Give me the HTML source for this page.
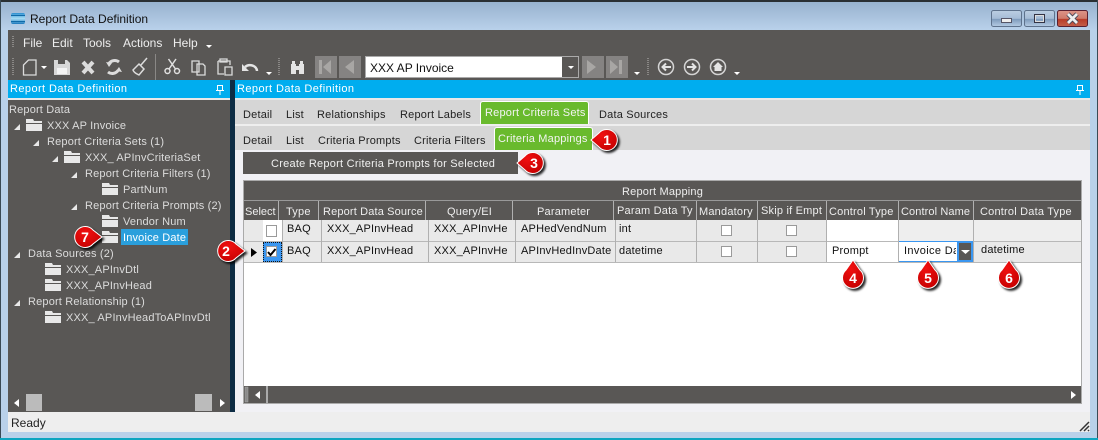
<!DOCTYPE html>
<html><head><meta charset="utf-8"><style>
html,body{margin:0;padding:0;width:1098px;height:440px;overflow:hidden;background:#b9d1ea}
body{position:relative;font-family:"Liberation Sans",sans-serif;font-size:11px;color:#111}
.b{position:absolute}
.t{position:absolute;white-space:nowrap;line-height:14px;height:14px}
.m{color:#eee;font-size:12px}
.n{color:#fff;font-size:11px;letter-spacing:.42px}
.tr{color:#dcdcdc;font-size:11px;letter-spacing:.17px}
.tb{color:#222;font-size:11px;letter-spacing:.2px}
.h{color:#eee;font-size:11px;letter-spacing:.2px}
.c{color:#111;font-size:11px;letter-spacing:.2px}
</style></head><body>
<div class="b" style="left:0;top:0;width:1098px;height:440px;background:#b9d1ea"></div>
<div class="b" style="left:0;top:2px;width:1098px;height:28px;background:linear-gradient(#98b2ce,#b9d1ea)"></div>
<div class="b" style="left:0;top:0;width:1098px;height:2px;background:#2a2f33"></div>
<div class="b" style="left:0;top:0;width:1px;height:440px;background:#3a4a55"></div>
<div class="b" style="left:1097px;top:0;width:1px;height:440px;background:#3a4a55"></div>
<div class="b" style="left:0;top:438px;width:1098px;height:2px;background:#0ea5c0"></div>
<div class="t" style="left:30px;top:12px;font-size:12px;color:#111">Report Data Definition</div>

<div class="b" style="left:8px;top:30px;width:1082px;height:50px;background:#595755"></div>
<div class="b" style="left:8px;top:80px;width:1082px;height:18px;background:#00adef"></div>
<div class="b" style="left:8px;top:98px;width:222px;height:2px;background:#e8e8e8"></div>
<div class="b" style="left:8px;top:100px;width:222px;height:312px;background:#595755"></div>
<div class="b" style="left:230px;top:80px;width:5px;height:332px;background:#0d2c44"></div>
<div class="b" style="left:235px;top:98px;width:855px;height:2px;background:#e8e8e8"></div>
<div class="b" style="left:235px;top:100px;width:855px;height:24px;background:#d6d6d6"></div>
<div class="b" style="left:235px;top:124px;width:855px;height:2px;background:#eee"></div>
<div class="b" style="left:235px;top:126px;width:855px;height:24px;background:#d6d6d6"></div>
<div class="b" style="left:235px;top:150px;width:855px;height:262px;background:#f1f1f5"></div>
<div class="b" style="left:8px;top:412px;width:1082px;height:20px;background:#eeeeee"></div>

<div class="t m" style="left:23px;top:36px">File</div>
<div class="t m" style="left:52px;top:36px">Edit</div>
<div class="t m" style="left:83px;top:36px">Tools</div>
<div class="t m" style="left:123px;top:36px">Actions</div>
<div class="t m" style="left:173px;top:36px">Help</div>
<div class="t n" style="left:10px;top:82px">Report Data Definition</div>
<div class="t n" style="left:237px;top:82px">Report Data Definition</div>

<div class="b" style="left:315px;top:56px;width:22px;height:22px;background:#858382"></div>
<div class="b" style="left:339px;top:56px;width:22px;height:22px;background:#858382"></div>
<div class="b" style="left:365px;top:56px;width:214px;height:22px;background:#fff;box-sizing:border-box;border:1px solid #aaa"></div>
<div class="b" style="left:562px;top:57px;width:16px;height:20px;background:#595755"></div>
<div class="t" style="left:370px;top:61px;font-size:12px;color:#111">XXX AP Invoice</div>
<div class="b" style="left:582px;top:56px;width:22px;height:22px;background:#858382"></div>
<div class="b" style="left:606px;top:56px;width:22px;height:22px;background:#858382"></div>

<div class="t tr" style="left:9px;top:103px">Report Data</div>
<div class="t tr" style="left:47px;top:119px">XXX AP Invoice</div>
<div class="t tr" style="left:47px;top:135px">Report Criteria Sets (1)</div>
<div class="t tr" style="left:85px;top:151px">XXX_ APInvCriteriaSet</div>
<div class="t tr" style="left:85px;top:167px">Report Criteria Filters (1)</div>
<div class="t tr" style="left:123px;top:183px">PartNum</div>
<div class="t tr" style="left:85px;top:199px">Report Criteria Prompts (2)</div>
<div class="t tr" style="left:123px;top:215px">Vendor Num</div>
<div class="b" style="left:121px;top:229px;width:67px;height:16px;background:#2a9fdc"></div>
<div class="t tr" style="left:123px;top:231px;color:#fff">Invoice Date</div>
<div class="t tr" style="left:28px;top:247px">Data Sources (2)</div>
<div class="t tr" style="left:66px;top:263px">XXX_APInvDtl</div>
<div class="t tr" style="left:66px;top:279px">XXX_APInvHead</div>
<div class="t tr" style="left:28px;top:295px">Report Relationship (1)</div>
<div class="t tr" style="left:66px;top:311px">XXX_ APInvHeadToAPInvDtl</div>

<div class="b" style="left:26px;top:394px;width:16px;height:17px;background:#bbb"></div>
<div class="b" style="left:195px;top:394px;width:17px;height:17px;background:#bbb"></div>

<div class="b" style="left:480px;top:101px;width:109px;height:23px;box-sizing:border-box;background:#69ba2d;border:1px solid #fff;border-bottom:0;border-radius:3px 3px 0 0"></div>
<div class="b" style="left:494px;top:127px;width:99px;height:23px;box-sizing:border-box;background:#69ba2d;border:1px solid #fff;border-bottom:0;border-radius:3px 3px 0 0"></div>
<div class="t tb" style="left:243px;top:108px">Detail</div>
<div class="t tb" style="left:286px;top:108px">List</div>
<div class="t tb" style="left:317px;top:108px">Relationships</div>
<div class="t tb" style="left:400px;top:108px">Report Labels</div>
<div class="t tb" style="left:485px;top:106px;color:#f4f4f4">Report Criteria Sets</div>
<div class="t tb" style="left:599px;top:108px">Data Sources</div>
<div class="t tb" style="left:243px;top:134px">Detail</div>
<div class="t tb" style="left:286px;top:134px">List</div>
<div class="t tb" style="left:318px;top:134px">Criteria Prompts</div>
<div class="t tb" style="left:414px;top:134px">Criteria Filters</div>
<div class="t tb" style="left:498px;top:132px;color:#f4f4f4">Criteria Mappings</div>
<div class="b" style="left:243px;top:152px;width:275px;height:22px;background:#595755"></div>
<div class="t" style="left:271px;top:157px;color:#f0f0f0;letter-spacing:.25px">Create Report Criteria Prompts for Selected</div>

<div class="b" style="left:243px;top:180px;width:839px;height:224px;background:#fff;box-sizing:border-box;border:1px solid #aaa"></div>
<div class="b" style="left:244px;top:181px;width:837px;height:39px;background:#595755"></div>
<div class="b" style="left:244px;top:200px;width:837px;height:1px;background:#999"></div>
<div class="t h" style="left:622px;top:185px">Report Mapping</div>
<div class="b" style="left:244px;top:220px;width:837px;height:42px;background:#e9e9e9"></div>
<div class="b" style="left:244px;top:241px;width:837px;height:1px;background:#b8b8b8"></div>
<div class="b" style="left:244px;top:262px;width:837px;height:1px;background:#b8b8b8"></div>
<div class="b" style="left:263px;top:220px;width:19px;height:21px;background:#fff"></div>
<div class="b" style="left:827px;top:220px;width:71px;height:21px;background:#fff"></div>
<div class="b" style="left:827px;top:242px;width:71px;height:20px;background:#fff"></div>
<div class="b" style="left:898px;top:220px;width:75px;height:21px;background:#eeeeee"></div>
<div class="b" style="left:973px;top:220px;width:108px;height:21px;background:#eeeeee"></div>
<div class="b" style="left:263px;top:242px;width:19px;height:20px;background:#3a96f0;box-sizing:border-box;border:1px dotted #111"></div>
<div class="b" style="left:898px;top:241px;width:75px;height:21px;background:#fff;box-sizing:border-box;border:1px solid #3a96f0"></div>
<div class="b" style="left:957px;top:241px;width:16px;height:21px;background:#595755;box-sizing:border-box;border:2px solid #3a96f0"></div>

<svg class="b" style="left:0;top:0" width="1098" height="440" viewBox="0 0 1098 440" fill="none">
<defs>
<linearGradient id="wb" x1="0" y1="0" x2="0" y2="1"><stop offset="0" stop-color="#bccee2"/><stop offset=".5" stop-color="#a5bcd6"/><stop offset=".55" stop-color="#7f9cbc"/><stop offset="1" stop-color="#b6cce4"/></linearGradient>
<linearGradient id="wc" x1="0" y1="0" x2="0" y2="1"><stop offset="0" stop-color="#dd9488"/><stop offset=".5" stop-color="#cf7a6a"/><stop offset=".55" stop-color="#b83c28"/><stop offset="1" stop-color="#c4604a"/></linearGradient>
<linearGradient id="ic" x1="0" y1="0" x2="0" y2="1"><stop offset="0" stop-color="#2b8fd0"/><stop offset=".5" stop-color="#a8dcf4"/><stop offset="1" stop-color="#1a78bc"/></linearGradient>
</defs>
<g stroke="#b0b0b0" stroke-width="1">
<path d="M278.500 201V220M318.500 201V220M425.500 201V220M512.500 201V220M613.500 201V220"/>
<path d="M282.500 220V262M321.500 220V262M428.500 220V262M515.500 220V262M615.500 220V262"/>
<path d="M696.500 201V262M757.500 201V262M826.500 201V262M898.500 201V262M973.500 201V262"/>
</g>
<g fill="#fff" stroke="#9a9a9a"><rect x="266.500" y="225.500" width="10" height="11"/><rect x="721.500" y="225.500" width="10" height="10"/><rect x="786.500" y="225.500" width="10" height="10"/><rect x="721.500" y="246.500" width="10" height="10"/><rect x="786.500" y="246.500" width="10" height="10"/><rect x="266.500" y="246.500" width="10" height="10"/></g>
<path d="M268 252l2.500 3 5-6" stroke="#000" stroke-width="2"/>
<path d="M251 248l6 4.500-6 4.500z" fill="#000"/>
<path d="M961 250h9l-4.500 4z" fill="#fff"/>

<rect x="11" y="13" width="14" height="11" rx="2" fill="url(#ic)"/><rect x="11" y="15" width="14" height="1" fill="#0f6aa8"/><rect x="11" y="21" width="14" height="1" fill="#0f6aa8"/>
<rect x="991.500" y="10.500" width="30" height="16" rx="2" fill="url(#wb)" stroke="#5e728c"/>
<rect x="1024.500" y="10.500" width="30" height="16" rx="2" fill="url(#wb)" stroke="#5e728c"/>
<rect x="1057.500" y="10.500" width="30" height="16" rx="2" fill="url(#wc)" stroke="#5a2030"/>
<rect x="1001.500" y="18.500" width="10" height="4" fill="#eee" stroke="#556"/>
<rect x="1034.500" y="14.500" width="10" height="8" fill="none" stroke="#334" stroke-width="1"/>
<rect x="1035.500" y="15.500" width="8" height="6" fill="none" stroke="#ddd" stroke-width="1"/>
<path d="M1068 14l9 9M1077 14l-9 9" stroke="#445" stroke-width="4.500"/>
<path d="M1068 14l9 9M1077 14l-9 9" stroke="#eee" stroke-width="2.800"/>

<g fill="#8a8886"><rect x="12" y="36" width="2" height="1"/><rect x="12" y="38" width="2" height="1"/><rect x="12" y="40" width="2" height="1"/><rect x="12" y="42" width="2" height="1"/><rect x="12" y="44" width="2" height="1"/><rect x="12" y="46" width="2" height="1"/>
<rect x="12" y="58" width="2" height="1"/><rect x="12" y="60" width="2" height="1"/><rect x="12" y="62" width="2" height="1"/><rect x="12" y="64" width="2" height="1"/><rect x="12" y="66" width="2" height="1"/><rect x="12" y="68" width="2" height="1"/><rect x="12" y="70" width="2" height="1"/><rect x="12" y="72" width="2" height="1"/><rect x="12" y="74" width="2" height="1"/>
<rect x="278" y="58" width="2" height="1"/><rect x="278" y="60" width="2" height="1"/><rect x="278" y="62" width="2" height="1"/><rect x="278" y="64" width="2" height="1"/><rect x="278" y="66" width="2" height="1"/><rect x="278" y="68" width="2" height="1"/><rect x="278" y="70" width="2" height="1"/><rect x="278" y="72" width="2" height="1"/><rect x="278" y="74" width="2" height="1"/>
<rect x="647" y="58" width="2" height="1"/><rect x="647" y="60" width="2" height="1"/><rect x="647" y="62" width="2" height="1"/><rect x="647" y="64" width="2" height="1"/><rect x="647" y="66" width="2" height="1"/><rect x="647" y="68" width="2" height="1"/><rect x="647" y="70" width="2" height="1"/><rect x="647" y="72" width="2" height="1"/><rect x="647" y="74" width="2" height="1"/>
<rect x="155" y="54" width="1" height="26"/></g>

<g fill="#fff">
<path d="M206 45h6l-3 3zM41 66h6l-3 3zM266 72h6l-3 3zM634 72h6l-3 3zM734 72h6l-3 3zM568 66h6l-3 3z"/>
</g>
<path d="M23.500 65l5-5h7.500v15h-12.500z" stroke="#dcdcdc" stroke-width="1.300"/>
<path d="M54 60h13l3 3v12h-16z" fill="#d8d8d8"/><rect x="58" y="60" width="7" height="4" fill="#595755"/><rect x="57" y="68" width="10" height="6" fill="#f4f4f4"/>
<path d="M83 62l10 11M93 62l-10 11" stroke="#dcdcdc" stroke-width="4"/>
<path d="M119 62a7 7 0 0 0-10 1.500M108 72a7 7 0 0 0 10-1.500" stroke="#dcdcdc" stroke-width="3"/>
<path d="M106 62l6 1-3 4zM122 72l-6-1 3-4z" fill="#dcdcdc"/>
<path d="M147 58l-6 7M133 70l6-6 5 5-5 6c-2-1-5-2-6-5z" stroke="#dcdcdc" stroke-width="1.500"/>
<g stroke="#e0e0e0" stroke-width="1.500"><circle cx="167.500" cy="71" r="2.500"/><circle cx="177" cy="71" r="2.500"/><path d="M169 69l7-10M175.500 69l-7-10"/></g>
<path d="M192 61h7v11h-7zM197 64h6l2 2v9h-8z" stroke="#dcdcdc" stroke-width="1.300"/>
<path d="M218 61h12v4M218 61v13h6M220 59h7v3h-7zM225 67h7v8h-7z" stroke="#dcdcdc" stroke-width="1.300"/>
<path d="M245 67a7 6 0 0 1 12 4" stroke="#e4e4e4" stroke-width="2.500"/><path d="M242 64v7h7z" fill="#e4e4e4"/>
<path d="M291 64h5v10h-5zM299 64h5v10h-5zM296 66h3v4h-3zM292 61h3v3h-3zM300 61h3v3h-3z" fill="#e4e4e4"/>
<path d="M319 60h3v14h-3zM331 60v14l-8-7zM354 60v14l-9-7z" fill="#a8a6a4"/>
<path d="M587 60v14l9-7zM610 60l8 7-8 7zM619 60h3v14h-3z" fill="#a8a6a4"/>
<g stroke="#d4d4d4" stroke-width="1.500"><circle cx="666" cy="67" r="7.500"/><circle cx="692" cy="67" r="7.500"/><circle cx="718" cy="67" r="7.500"/></g>
<path d="M671 67h-8M666 63.500l-3.500 3.500 3.500 3.500M687 67h8M692 63.500l3.500 3.500-3.500 3.500" stroke="#e4e4e4" stroke-width="2"/>
<path d="M718 62l5 5h-1.500v4h-7v-4h-1.500z" fill="#e4e4e4"/>
<path d="M217.500 85.500h5v5h-5zM216 90.500h8M220 91v4M1077.500 85.500h5v5h-5zM1076 90.500h8M1080 91v4" stroke="#fff"/>

<g fill="#e8e8e8">
<path d="M20 124v6h-6zM39 140v6h-6zM58 156v6h-6zM77 172v6h-6zM77 204v6h-6zM20 252v6h-6zM20 300v6h-6z"/>
</g>
<g fill="#e8e8e8">
<path d="M26 119h7l1 2h8v2H26zM26 124h16v7H26z"/>
<path d="M64 151h7l1 2h8v2H64zM64 156h16v7H64z"/>
<path d="M102 183h7l1 2h8v2h-16zM102 188h16v7h-16z"/>
<path d="M102 215h7l1 2h8v2h-16zM102 220h16v7h-16z"/>
<path d="M102 231h7l1 2h8v2h-16zM102 236h16v7h-16z"/>
<path d="M45 263h7l1 2h8v2H45zM45 268h16v7H45z"/>
<path d="M45 279h7l1 2h8v2H45zM45 284h16v7H45z"/>
<path d="M45 311h7l1 2h8v2H45zM45 316h16v7H45z"/>
</g>
<path d="M19 399v8l-5-4zM220 399v8l5-4z" fill="#fff"/>
<rect x="244" y="386" width="837" height="17" fill="#595755"/>
<rect x="245" y="387" width="3" height="15" fill="#8a8a8a" stroke="#aaa" stroke-width=".5"/>
<rect x="266" y="386" width="2" height="17" fill="#aaa"/>
<path d="M260 391v8l-5-4zM1071 391v8l5-4z" fill="#fff"/>
<path d="M1080 431l9-9M1084 431l5-5M1088 431l1-1" stroke="#333" stroke-width="1.500"/>
</svg>

<div class="t h" style="left:245px;top:205px;letter-spacing:0">Select</div>
<div class="t h" style="left:286px;top:205px">Type</div>
<div class="t h" style="left:323px;top:205px;letter-spacing:.15px">Report Data Source</div>
<div class="t h" style="left:447px;top:205px">Query/EI</div>
<div class="t h" style="left:537px;top:205px">Parameter</div>
<div class="t h" style="left:617px;top:204px">Param Data Ty</div>
<div class="t h" style="left:699px;top:205px">Mandatory</div>
<div class="t h" style="left:761px;top:204px">Skip if Empt</div>
<div class="t h" style="left:829px;top:205px">Control Type</div>
<div class="t h" style="left:901px;top:205px;letter-spacing:.1px">Control Name</div>
<div class="t h" style="left:980px;top:205px">Control Data Type</div>

<div class="t c" style="left:287px;top:222px">BAQ</div>
<div class="t c" style="left:327px;top:222px">XXX_APInvHead</div>
<div class="t c" style="left:434px;top:222px">XXX_APInvHe</div>
<div class="t c" style="left:521px;top:222px">APHedVendNum</div>
<div class="t c" style="left:619px;top:222px">int</div>
<div class="t c" style="left:287px;top:244px">BAQ</div>
<div class="t c" style="left:327px;top:244px">XXX_APInvHead</div>
<div class="t c" style="left:434px;top:244px">XXX_APInvHe</div>
<div class="t c" style="left:521px;top:244px">APInvHedInvDate</div>
<div class="t c" style="left:619px;top:244px">datetime</div>
<div class="t c" style="left:832px;top:244px">Prompt</div>
<div class="b" style="left:904px;top:243px;width:52px;height:16px;overflow:hidden"><div class="t c" style="left:0;top:1px;letter-spacing:.35px">Invoice Date</div></div>
<div class="t c" style="left:981px;top:243px">datetime</div>
<div class="t" style="left:11px;top:416px;font-size:12px;color:#222">Ready</div>

<svg class="b" style="left:0;top:0" width="1098" height="440" viewBox="0 0 1098 440" fill="none">
<defs><radialGradient id="r" cx=".4" cy=".3" r=".8"><stop offset="0" stop-color="#f01010"/><stop offset="1" stop-color="#c40000"/></radialGradient></defs>
<g stroke="#fff" stroke-width="1" fill="url(#r)" style="filter:drop-shadow(2px 2px 1px rgba(0,0,0,.85))">
<path d="M591 140l8-7a10.500 10.500 0 1 1 0 14z"/>
<path d="M517 163l8-7a10.500 10.500 0 1 1 0 14z"/>
<path d="M245 251l-9-7a10.500 10.500 0 1 0 0 14z"/>
<path d="M102 237l-9-7a10.500 10.500 0 1 0 0 14z"/>
<path d="M853 260l7 10a10.500 10.500 0 1 1-14 0z"/>
<path d="M928 260l7 10a10.500 10.500 0 1 1-14 0z"/>
<path d="M1009 260l7 10a10.500 10.500 0 1 1-14 0z"/>
</g>
<g fill="#fff" font-family="Liberation Sans, sans-serif" font-weight="700" font-size="14" text-anchor="middle">
<text x="607" y="145">1</text>
<text x="226" y="256">2</text>
<text x="534" y="168">3</text>
<text x="853" y="283">4</text>
<text x="928" y="283">5</text>
<text x="1009" y="283">6</text>
<text x="85" y="242">7</text>
</g>
</svg>
</body></html>
